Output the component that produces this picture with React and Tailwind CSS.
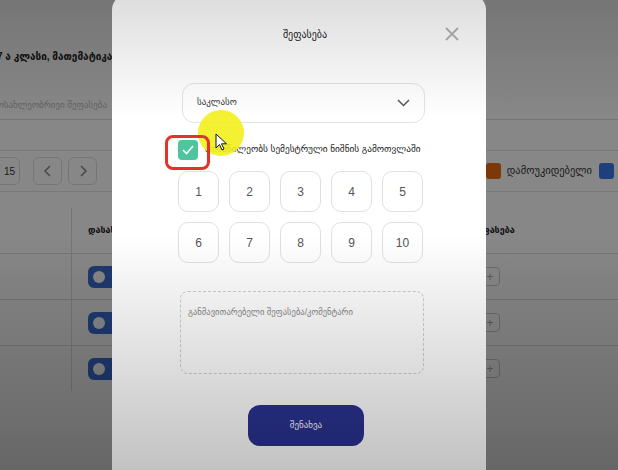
import React from "react";

const grades = [1, 2, 3, 4, 5, 6, 7, 8, 9, 10];
const rows = [0, 1, 2];

const Toggle = () => (
    <div className="flex h-[22px] w-[44px] items-center rounded-md bg-[#3b6fd4] pl-[5px]">
        <div className="h-[12px] w-[12px] rounded-full bg-white" />
    </div>
);

const BackgroundPage = () => (
    <div className="flex h-full w-full flex-col bg-white font-['Liberation_Sans','DejaVu_Sans',sans-serif] text-[#222]">
        {/* Lesson title */}
        <div className="-ml-[3px] mt-[50px] h-[14px] whitespace-nowrap text-[10px] font-bold leading-[14px]">
            7 ა კლასი, მათემატიკა
        </div>

        {/* Search input */}
        <div className="mt-[28px] flex h-[28px] items-center justify-end border-b border-[#ddd] pr-[511px]">
            <span className="whitespace-nowrap text-[9px] text-[#bbb]">მოსახლეობრივი შეფასება</span>
        </div>

        {/* Pagination + legend */}
        <div className="mt-[30px] flex h-[42px] items-center border-y border-[#e4e4e4]">
            <div className="-ml-[12px] flex h-[28px] w-[32px] items-center justify-end rounded-md border border-[#ddd] pr-[4px] text-[10px] text-[#333]">
                15
            </div>
            <div className="ml-[13px] flex h-[28px] w-[29px] items-center justify-center rounded-md border border-[#ddd] text-[#888]">
                <svg width="10" height="12" viewBox="0 0 10 12" fill="none" stroke="currentColor" strokeWidth="1.5"><path d="M7 1L2 6l5 5" /></svg>
            </div>
            <div className="ml-[6px] flex h-[28px] w-[29px] items-center justify-center rounded-md border border-[#ddd] text-[#888]">
                <svg width="10" height="12" viewBox="0 0 10 12" fill="none" stroke="currentColor" strokeWidth="1.5"><path d="M3 1l5 5-5 5" /></svg>
            </div>
            <div className="ml-auto flex items-center gap-[6px] pr-[4px]">
                <div className="h-[16px] w-[15px] rounded-[3px] bg-[#ec6b12]" />
                <span className="whitespace-nowrap text-[10.5px] text-[#333]">დამოუკიდებელი</span>
                <div className="ml-[1px] h-[16px] w-[15px] rounded-[3px] bg-[#3b78e7]" />
            </div>
        </div>

        {/* Table */}
        <div className="mt-[16px] grid grid-cols-[72px_394px_1fr]">
            <div className="h-[45px] border-r border-[#ddd]" />
            <div className="flex h-[45px] items-center pl-[16px] text-[9px] font-bold">დასახელება</div>
            <div className="flex h-[45px] items-center pl-[6px] text-[9px] font-bold">შეფასება</div>
            {rows.map((r) => (
                <React.Fragment key={r}>
                    <div className="h-[46px] border-r border-t border-[#ddd]" />
                    <div className="flex h-[46px] items-center border-t border-[#ddd] pl-[16px]">
                        <Toggle />
                    </div>
                    <div className="flex h-[46px] items-center border-t border-[#ddd] pl-[14px]">
                        <div className="flex h-[19px] w-[20px] items-center justify-center rounded-[4px] border border-[#ccc] text-[12px] text-[#aaa]">+</div>
                    </div>
                </React.Fragment>
            ))}
        </div>
    </div>
);

const GradeModal = () => (
    <div className="absolute left-[112px] top-[-6px] flex h-[500px] w-[374px] flex-col items-start rounded-2xl bg-white font-['Liberation_Sans','DejaVu_Sans',sans-serif]">
        {/* Header */}
        <div className="relative mt-[34px] flex w-full justify-center pl-[12px]">
            <span className="text-[10px] leading-[14px] text-[#222]">შეფასება</span>
            <button className="absolute right-[27px] top-[-1px] text-[#b4b4b4]">
                <svg width="14" height="14" viewBox="0 0 14 14" fill="none" stroke="currentColor" strokeWidth="1.8"><path d="M1 1l12 12M13 1L1 13" /></svg>
            </button>
        </div>

        {/* Select */}
        <div className="ml-[70px] mt-[41px] flex h-[40px] w-[243px] items-center justify-between rounded-xl border border-[#e2e2e2] pl-[14px] pr-[14px]">
            <span className="text-[9px] text-[#333]">საკლასო</span>
            <svg width="13" height="8" viewBox="0 0 13 8" fill="none" stroke="#555" strokeWidth="1.5"><path d="M1 1l5.5 5.5L12 1" /></svg>
        </div>

        {/* Checkbox */}
        <div className="ml-[66px] mt-[17px] flex h-[20px] items-center">
            <div className="flex h-[20px] w-[20px] items-center justify-center rounded-[4px] bg-[#4fc49f]">
                <svg width="12" height="10" viewBox="0 0 12 10" fill="none" stroke="white" strokeWidth="1.6"><path d="M1 5l3.5 3.5L11 1" /></svg>
            </div>
            <span className="ml-[7px] whitespace-nowrap text-[9.3px] text-[#222]">მონაწილეობს სემესტრული ნიშნის გამოთვლაში</span>
        </div>

        {/* Grade buttons */}
        <div className="ml-[66px] mt-[11px] grid grid-cols-5 gap-[10px]">
            {grades.map((g) => (
                <div key={g} className="flex h-[41px] w-[41px] items-center justify-center rounded-[10px] border border-[#e0e0e0] text-[12px] text-[#555]">
                    {g}
                </div>
            ))}
        </div>

        {/* Comment */}
        <div className="ml-[68px] mt-[28px] h-[83px] w-[244px] rounded-lg border border-dashed border-[#cfcfcf] px-[7px] pt-[6px]">
            <span className="whitespace-nowrap text-[8.6px] text-[#888]">განმავითარებელი შეფასება/კომენტარი</span>
        </div>

        {/* Save */}
        <button className="ml-[136px] mt-[31px] flex h-[41px] w-[116px] items-center justify-center rounded-xl bg-[#2a3290] text-[9px] text-white">
            შენახვა
        </button>
    </div>
);

export default function App() {
    return (
        <div className="relative h-[470px] w-[618px] overflow-hidden">
            <BackgroundPage />
            <div className="absolute inset-0 bg-black/[0.47]" />
            <GradeModal />

            {/* Video annotations: cursor highlight, red frame, pointer */}
            <div className="absolute left-[198px] top-[110px] h-[46px] w-[46px] rounded-full bg-[#f3ef1c]/90" />
            <div className="absolute left-[165px] top-[135px] h-[35px] w-[45px] rounded-lg border-[3px] border-[#e53228]" />
            <svg className="absolute left-[215px] top-[133px]" width="12" height="18" viewBox="0 0 12 18">
                <path d="M1 1v14l3.5-3.5 2.5 5.5 2-1-2.5-5.2h5z" fill="white" stroke="#111" strokeWidth="1" strokeLinejoin="round" />
            </svg>

            {/* Video vignette */}
            <div className="pointer-events-none absolute inset-0 bg-[linear-gradient(to_bottom,rgba(0,0,0,0.13)_0%,rgba(0,0,0,0)_25%,rgba(0,0,0,0)_50%,rgba(0,0,0,0.24)_100%)]" />
        </div>
    );
}
